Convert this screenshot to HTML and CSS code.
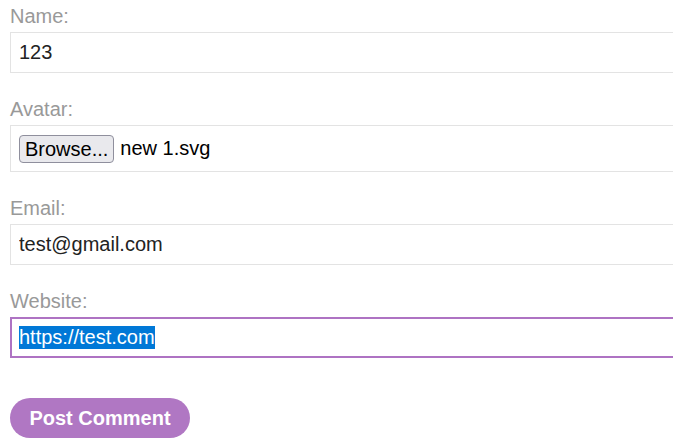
FILE: index.html
```html
<!DOCTYPE html>
<html lang="en">
<head>
<meta charset="utf-8">
<title>Comment form</title>
<link rel="stylesheet" href="styles.css">
</head>
<body>
<form class="comment-form">
  <div class="group">
    <label class="label" for="name">Name:</label>
    <input class="field" id="name" type="text" value="123">
  </div>
  <div class="group">
    <label class="label">Avatar:</label>
    <div class="field file-field">
      <span class="browse">Browse...</span>
      <span class="file-name">new 1.svg</span>
    </div>
  </div>
  <div class="group">
    <label class="label" for="email">Email:</label>
    <input class="field" id="email" type="text" value="test@gmail.com">
  </div>
  <div class="group">
    <label class="label">Website:</label>
    <div class="field field-focus"><span class="selected">https://test.com</span></div>
  </div>
  <button class="submit" type="button">Post Comment</button>
</form>
</body>
</html>
```
FILE: styles.css
```css
html, body {
  margin: 0;
  padding: 0;
  overflow: hidden;
  background: #ffffff;
}

body {
  font-family: "Liberation Sans", Arial, sans-serif;
  font-size: 20px;
}

.comment-form {
  width: 700px;
  padding: 5px 0 0 10px;
  display: flex;
  flex-direction: column;
}

.group {
  display: flex;
  flex-direction: column;
  margin-bottom: 25px;
}

.label {
  display: block;
  color: #999999;
  line-height: 23px;
  margin-bottom: 4px;
}

.field {
  box-sizing: border-box;
  width: 100%;
  height: 41px;
  margin: 0;
  padding: 0 8px;
  border: 1px solid #e3e3e3;
  border-radius: 0;
  font-family: "Liberation Sans", Arial, sans-serif;
  font-size: 20px;
  line-height: 23px;
  color: #222222;
  background: #ffffff;
  outline: none;
  display: flex;
  align-items: center;
}

.file-field {
  height: 47px;
  gap: 6px;
}

.browse {
  display: inline-block;
  box-sizing: border-box;
  height: 28px;
  padding: 1px 5px 0;
  line-height: 25px;
  border: 1px solid #8f8f9d;
  border-radius: 4px;
  background: #e9e9ed;
  color: #000000;
}

.file-name {
  color: #000000;
}

.field-focus {
  border: 2px solid #ae73c3;
  padding: 0 7px;
}

.selected {
  background: #0078d7;
  color: #ffffff;
}

.group:nth-child(4) {
  margin-bottom: 40px;
}

.submit {
  align-self: flex-start;
  width: 180px;
  height: 40px;
  border: none;
  border-radius: 20px;
  background: #b077c3;
  color: #ffffff;
  font-family: "Liberation Sans", Arial, sans-serif;
  font-size: 20px;
  font-weight: bold;
  padding: 0;
  cursor: pointer;
}
```
